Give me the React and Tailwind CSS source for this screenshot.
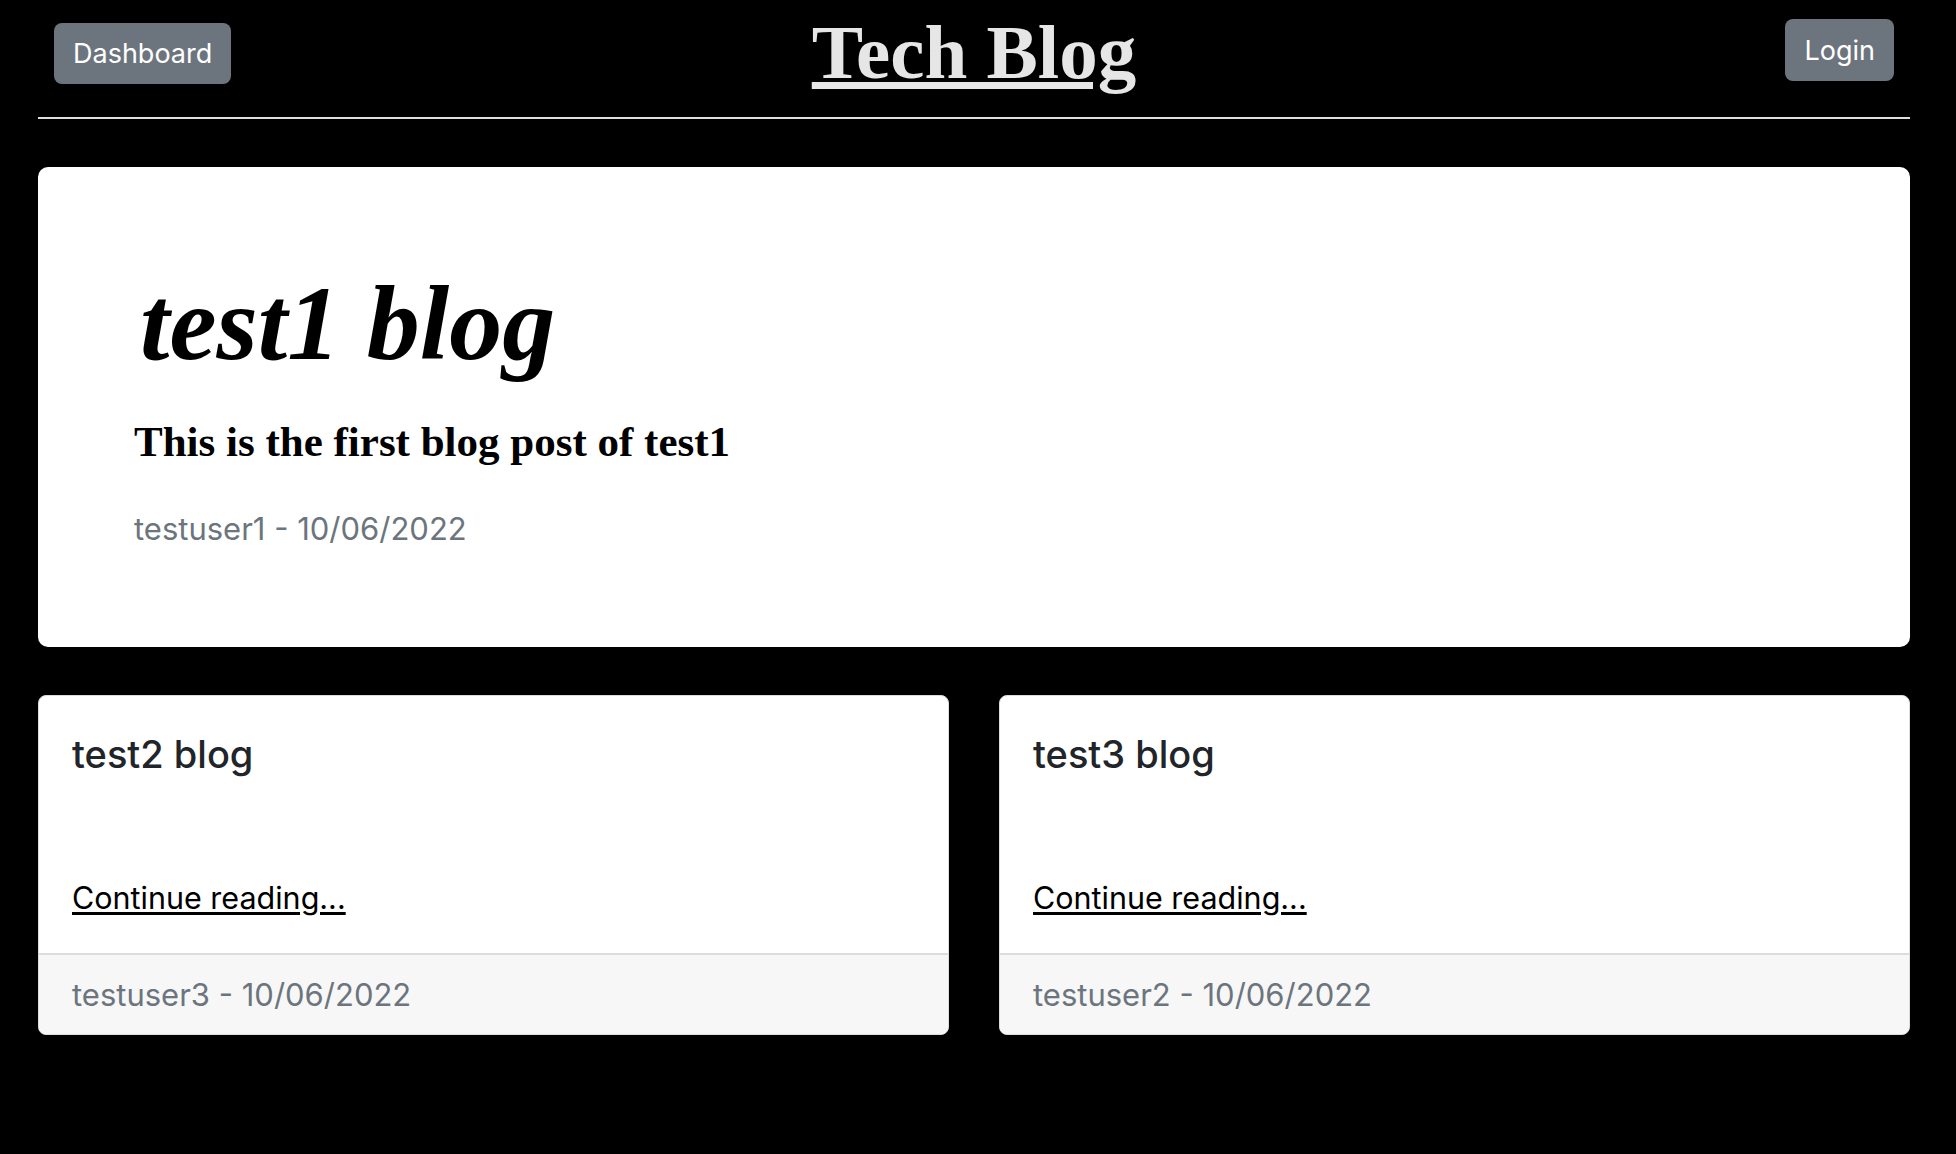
export default function App() {
  const posts = [
    { title: "test2 blog", author: "testuser3", date: "10/06/2022" },
    { title: "test3 blog", author: "testuser2", date: "10/06/2022" },
  ];

  return (
    <div className="min-h-screen bg-black pl-[38px] pr-[46px] font-['Inter',sans-serif]">
      <header className="grid h-[117px] grid-cols-[1fr_auto_1fr] items-start px-4">
        <button className="mt-[23px] flex h-[61px] items-center justify-self-start rounded-[8px] bg-[#6c757d] px-[19px] text-[27px] leading-none text-white">
          Dashboard
        </button>
        <h1 className="mt-[14px] font-['Liberation_Serif',serif] text-[77px] font-bold leading-none text-[#e6e6e6] underline decoration-[length:7px] underline-offset-[4px]">
          Tech Blog
        </h1>
        <button className="mt-[19px] flex h-[62px] items-center justify-self-end rounded-[8px] bg-[#6c757d] px-[19px] text-[27px] leading-none text-white">
          Login
        </button>
      </header>
      <div className="h-[2px] bg-[#dedede]" />

      <section className="mt-[48px] h-[480px] rounded-[10px] bg-white pl-[96px] pt-[104px]">
        <h2 className="ml-[6px] font-['Liberation_Serif',serif] text-[106px] font-bold italic leading-none text-black">
          test1 blog
        </h2>
        <p className="mt-[43px] font-['Liberation_Serif',serif] text-[43px] font-bold leading-none text-black">
          This is the first blog post of test1
        </p>
        <p className="mt-[50px] text-[31px] leading-none text-[#6c757d]">
          testuser1 - 10/06/2022
        </p>
      </section>

      <div className="mt-[48px] grid grid-cols-2 gap-[50px]">
        {posts.map((post) => (
          <div
            key={post.title}
            className="overflow-hidden rounded-[8px] border border-[#dcdcdc] bg-white"
          >
            <div className="h-[257px] px-[33px] pt-[39px]">
              <h3 className="text-[38px] font-medium leading-none text-[#212529]">
                {post.title}
              </h3>
              <a
                href="#"
                className="mt-[110px] block w-fit text-[30.5px] leading-none text-black underline underline-offset-[3px]"
              >
                Continue reading...
              </a>
            </div>
            <div className="flex h-[81px] items-center border-t-2 border-[#dcdcdc] bg-[#f7f7f7] px-[33px] text-[31px] leading-none text-[#6c757d]">
              {post.author} - {post.date}
            </div>
          </div>
        ))}
      </div>
    </div>
  );
}
